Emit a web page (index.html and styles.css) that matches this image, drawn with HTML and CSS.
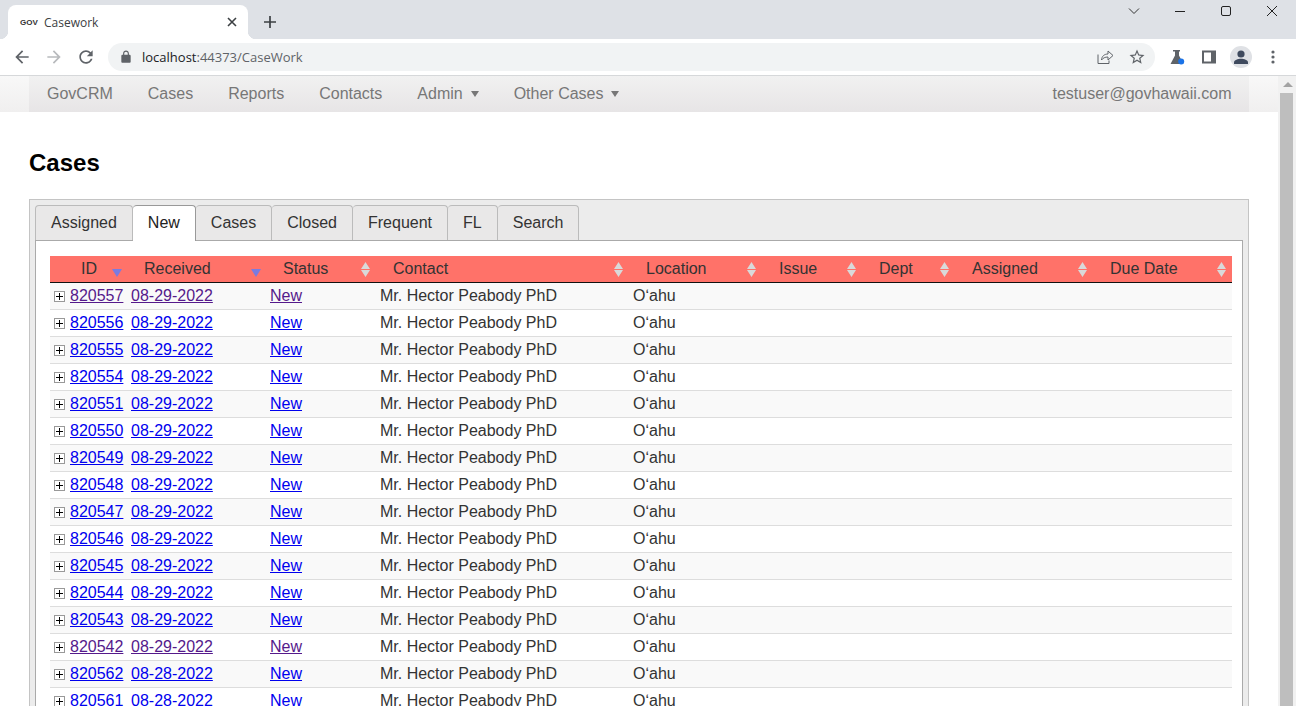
FILE: index.html
```html
<!DOCTYPE html>
<html lang="en">
<head>
    <meta charset="UTF-8">
    <title>Casework</title>
    <link rel="stylesheet" href="styles.css">
</head>
<body>
<div class="window">
    <div class="tabstrip">
        <div class="browser-tab">
            <span class="favicon">GOV</span>
            <span class="tab-title">Casework</span>
            <svg class="tab-close" width="10" height="10" viewBox="0 0 10 10"><path d="M1 1l8 8M9 1l-8 8" stroke="#3c4043" stroke-width="1.6" fill="none"/></svg>
        </div>
        <svg class="new-tab" width="14" height="14" viewBox="0 0 14 14"><path d="M7 1v12M1 7h12" stroke="#3c4043" stroke-width="1.7" fill="none"/></svg>
        <div class="win-controls">
            <span class="win-btn"><svg width="12" height="12" viewBox="0 0 12 12"><path d="M1 3.5l5 5 5-5" stroke="#333" fill="none"/></svg></span>
            <span class="win-btn"><svg width="12" height="12" viewBox="0 0 12 12"><path d="M1 6.5h10" stroke="#222" fill="none"/></svg></span>
            <span class="win-btn"><svg width="12" height="12" viewBox="0 0 12 12"><rect x="1.5" y="1.5" width="9" height="9" rx="1.5" stroke="#222" fill="none"/></svg></span>
            <span class="win-btn"><svg width="12" height="12" viewBox="0 0 12 12"><path d="M1 1l10 10M11 1L1 11" stroke="#222" fill="none"/></svg></span>
        </div>
    </div>
    <div class="toolbar">
        <span class="tool-btn"><svg width="20" height="20" viewBox="0 0 24 24" fill="#5f6368"><path d="M20 11H7.83l5.59-5.59L12 4l-8 8 8 8 1.41-1.41L7.83 13H20v-2z"/></svg></span>
        <span class="tool-btn"><svg width="20" height="20" viewBox="0 0 24 24" fill="#b8babd"><path d="M4 11h12.17l-5.59-5.59L12 4l8 8-8 8-1.41-1.41L16.17 13H4v-2z"/></svg></span>
        <span class="tool-btn"><svg width="20" height="20" viewBox="0 0 24 24" fill="#5f6368"><path d="M17.65 6.35C16.2 4.9 14.21 4 12 4c-4.42 0-7.99 3.58-7.99 8s3.57 8 7.99 8c3.73 0 6.84-2.55 7.73-6h-2.08c-.82 2.33-3.04 4-5.65 4-3.31 0-6-2.69-6-6s2.69-6 6-6c1.66 0 3.14.69 4.22 1.78L13 11h7V4l-2.35 2.35z"/></svg></span>
        <div class="omnibox">
            <svg class="lock" width="14" height="14" viewBox="0 0 24 24" fill="#5f6368"><path d="M18 8h-1V6c0-2.76-2.24-5-5-5S7 3.24 7 6v2H6c-1.1 0-2 .9-2 2v10c0 1.1.9 2 2 2h12c1.1 0 2-.9 2-2V10c0-1.1-.9-2-2-2zM9 6c0-1.66 1.34-3 3-3s3 1.34 3 3v2H9V6z"/></svg>
            <span class="url"><span class="url-host">localhost</span>:44373/CaseWork</span>
            <span class="tool-btn push-right"><svg width="16" height="15" viewBox="0 0 16 15" fill="none" stroke="#5f6368"><path d="M1 5.5v9h11v-3"/><path d="M4.5 11c.3-4 3-6 6.500-6V2l5 4.500-5 4.500V8c-3 0-5 1-6.500 3z"/></svg></span>
            <span class="tool-btn"><svg width="18" height="18" viewBox="0 0 24 24" fill="#5f6368"><path d="M22 9.240l-7.190-.62L12 2 9.190 8.630 2 9.240l5.460 4.730L5.820 21 12 17.270 18.180 21l-1.630-7.030L22 9.240zM12 15.400l-3.760 2.270 1-4.280-3.320-2.880 4.380-.38L12 6.100l1.710 4.040 4.380.38-3.320 2.880 1 4.280L12 15.400z"/></svg></span>
        </div>
        <span class="tool-btn first-ext"><svg width="16" height="16" viewBox="0 0 16 16"><path d="M4 1h7v1.500h-1v4l4.500 8.500H1.500L6 6.500v-4H4z" fill="#5f6368"/><circle cx="12.200" cy="12.500" r="3" fill="#1a73e8"/></svg></span>
        <span class="tool-btn"><svg width="14" height="14" viewBox="0 0 14 14"><rect x="0" y="0.500" width="14" height="13" fill="#5f6368"/><rect x="2" y="2.500" width="7" height="9" fill="#fff"/></svg></span>
        <span class="tool-btn"><span class="avatar"><svg width="16" height="14" viewBox="0 0 16 14" fill="#3f4a5e"><circle cx="8" cy="4" r="3.600"/><path d="M1 14v-1.500C1 10 5 8.800 8 8.800s7 1.200 7 3.700V14z"/></svg></span></span>
        <span class="tool-btn"><svg width="4" height="14" viewBox="0 0 4 14" fill="#5f6368"><circle cx="2" cy="2" r="1.600"/><circle cx="2" cy="7" r="1.600"/><circle cx="2" cy="12" r="1.600"/></svg></span>
    </div>

    <div class="viewport">
        <div class="page">
            <div class="navbar">
                <div class="nav-inner">
                    <a class="nav-link">GovCRM</a>
                    <a class="nav-link">Cases</a>
                    <a class="nav-link">Reports</a>
                    <a class="nav-link">Contacts</a>
                    <a class="nav-link">Admin<span class="caret"></span></a>
                    <a class="nav-link">Other Cases<span class="caret"></span></a>
                    <a class="nav-link nav-user">testuser@govhawaii.com</a>
                </div>
            </div>

            <h1 class="page-title">Cases</h1>

            <div class="tabs-box">
                <ul class="tabs">
                    <li class="tab">Assigned</li>
                    <li class="tab tab-active">New</li>
                    <li class="tab">Cases</li>
                    <li class="tab">Closed</li>
                    <li class="tab">Frequent</li>
                    <li class="tab">FL</li>
                    <li class="tab">Search</li>
                </ul>
                <div class="tab-panel">
                    <table class="cases">
                        <colgroup>
                            <col class="col-id"><col class="col-received"><col class="col-status"><col class="col-contact"><col class="col-location"><col class="col-issue"><col class="col-dept"><col class="col-assigned"><col class="col-due">
                        </colgroup>
                        <thead>
                            <tr>
                                <th class="th-id"><div class="th-inner">ID<svg class="sort-down" width="10" height="8" viewBox="0 0 10 8"><path d="M0 0h10L5 8z"/></svg></div></th>
                                <th><div class="th-inner">Received<svg class="sort-down" width="10" height="8" viewBox="0 0 10 8"><path d="M0 0h10L5 8z"/></svg></div></th>
                                <th><div class="th-inner">Status<svg class="sort" width="9" height="15" viewBox="0 0 9 15"><path d="M4.500 0L9 7H0zM0 8h9l-4.500 7z"/></svg></div></th>
                                <th><div class="th-inner">Contact<svg class="sort" width="9" height="15" viewBox="0 0 9 15"><path d="M4.500 0L9 7H0zM0 8h9l-4.500 7z"/></svg></div></th>
                                <th><div class="th-inner">Location<svg class="sort" width="9" height="15" viewBox="0 0 9 15"><path d="M4.500 0L9 7H0zM0 8h9l-4.500 7z"/></svg></div></th>
                                <th><div class="th-inner">Issue<svg class="sort" width="9" height="15" viewBox="0 0 9 15"><path d="M4.500 0L9 7H0zM0 8h9l-4.500 7z"/></svg></div></th>
                                <th><div class="th-inner">Dept<svg class="sort" width="9" height="15" viewBox="0 0 9 15"><path d="M4.500 0L9 7H0zM0 8h9l-4.500 7z"/></svg></div></th>
                                <th><div class="th-inner">Assigned<svg class="sort" width="9" height="15" viewBox="0 0 9 15"><path d="M4.500 0L9 7H0zM0 8h9l-4.500 7z"/></svg></div></th>
                                <th><div class="th-inner">Due Date<svg class="sort" width="9" height="15" viewBox="0 0 9 15"><path d="M4.500 0L9 7H0zM0 8h9l-4.500 7z"/></svg></div></th>
                            </tr>
                        </thead>
                        <tbody>
                            <tr class="seen"><td><span class="expand"></span><a>820557</a></td><td><a>08-29-2022</a></td><td><a>New</a></td><td>Mr. Hector Peabody PhD</td><td>Oʻahu</td><td></td><td></td><td></td><td></td></tr>
                            <tr><td><span class="expand"></span><a>820556</a></td><td><a>08-29-2022</a></td><td><a>New</a></td><td>Mr. Hector Peabody PhD</td><td>Oʻahu</td><td></td><td></td><td></td><td></td></tr>
                            <tr><td><span class="expand"></span><a>820555</a></td><td><a>08-29-2022</a></td><td><a>New</a></td><td>Mr. Hector Peabody PhD</td><td>Oʻahu</td><td></td><td></td><td></td><td></td></tr>
                            <tr><td><span class="expand"></span><a>820554</a></td><td><a>08-29-2022</a></td><td><a>New</a></td><td>Mr. Hector Peabody PhD</td><td>Oʻahu</td><td></td><td></td><td></td><td></td></tr>
                            <tr><td><span class="expand"></span><a>820551</a></td><td><a>08-29-2022</a></td><td><a>New</a></td><td>Mr. Hector Peabody PhD</td><td>Oʻahu</td><td></td><td></td><td></td><td></td></tr>
                            <tr><td><span class="expand"></span><a>820550</a></td><td><a>08-29-2022</a></td><td><a>New</a></td><td>Mr. Hector Peabody PhD</td><td>Oʻahu</td><td></td><td></td><td></td><td></td></tr>
                            <tr><td><span class="expand"></span><a>820549</a></td><td><a>08-29-2022</a></td><td><a>New</a></td><td>Mr. Hector Peabody PhD</td><td>Oʻahu</td><td></td><td></td><td></td><td></td></tr>
                            <tr><td><span class="expand"></span><a>820548</a></td><td><a>08-29-2022</a></td><td><a>New</a></td><td>Mr. Hector Peabody PhD</td><td>Oʻahu</td><td></td><td></td><td></td><td></td></tr>
                            <tr><td><span class="expand"></span><a>820547</a></td><td><a>08-29-2022</a></td><td><a>New</a></td><td>Mr. Hector Peabody PhD</td><td>Oʻahu</td><td></td><td></td><td></td><td></td></tr>
                            <tr><td><span class="expand"></span><a>820546</a></td><td><a>08-29-2022</a></td><td><a>New</a></td><td>Mr. Hector Peabody PhD</td><td>Oʻahu</td><td></td><td></td><td></td><td></td></tr>
                            <tr><td><span class="expand"></span><a>820545</a></td><td><a>08-29-2022</a></td><td><a>New</a></td><td>Mr. Hector Peabody PhD</td><td>Oʻahu</td><td></td><td></td><td></td><td></td></tr>
                            <tr><td><span class="expand"></span><a>820544</a></td><td><a>08-29-2022</a></td><td><a>New</a></td><td>Mr. Hector Peabody PhD</td><td>Oʻahu</td><td></td><td></td><td></td><td></td></tr>
                            <tr><td><span class="expand"></span><a>820543</a></td><td><a>08-29-2022</a></td><td><a>New</a></td><td>Mr. Hector Peabody PhD</td><td>Oʻahu</td><td></td><td></td><td></td><td></td></tr>
                            <tr class="seen"><td><span class="expand"></span><a>820542</a></td><td><a>08-29-2022</a></td><td><a>New</a></td><td>Mr. Hector Peabody PhD</td><td>Oʻahu</td><td></td><td></td><td></td><td></td></tr>
                            <tr><td><span class="expand"></span><a>820562</a></td><td><a>08-28-2022</a></td><td><a>New</a></td><td>Mr. Hector Peabody PhD</td><td>Oʻahu</td><td></td><td></td><td></td><td></td></tr>
                            <tr><td><span class="expand"></span><a>820561</a></td><td><a>08-28-2022</a></td><td><a>New</a></td><td>Mr. Hector Peabody PhD</td><td>Oʻahu</td><td></td><td></td><td></td><td></td></tr>
                        </tbody>
                    </table>
                </div>
            </div>
        </div>
        <div class="scrollbar">
            <span class="scroll-up"></span>
            <div class="scroll-thumb"></div>
        </div>
    </div>
</div>
</body>
</html>
```
FILE: styles.css
```css
html, body {
    margin: 0;
    padding: 0;
    height: 100%;
    overflow: hidden;
}

body {
    font-family: "Liberation Sans", Arial, sans-serif;
    font-size: 16px;
    color: #333;
    background: #fff;
}

.window {
    display: flex;
    flex-direction: column;
    height: 100vh;
}

/* browser chrome */
.tabstrip {
    display: flex;
    align-items: flex-start;
    height: 39px;
    flex: none;
    padding-left: 8px;
    box-sizing: border-box;
    background: #dee1e6;
}

.browser-tab {
    position: relative;
    display: flex;
    align-items: center;
    width: 240px;
    height: 34px;
    margin-top: 5px;
    padding-left: 12px;
    box-sizing: border-box;
    background: #fff;
    border-radius: 8px 8px 0 0;
}

.browser-tab::before,
.browser-tab::after {
    content: "";
    position: absolute;
    bottom: 0;
    width: 8px;
    height: 8px;
}

.browser-tab::before {
    left: -8px;
    background: radial-gradient(circle at 0 0, #dee1e6 8px, #fff 8.500px);
}

.browser-tab::after {
    right: -8px;
    background: radial-gradient(circle at 100% 0, #dee1e6 8px, #fff 8.500px);
}

.favicon {
    width: 24px;
    font-family: "Liberation Sans", sans-serif;
    font-size: 8px;
    font-weight: bold;
    color: #333;
}

.tab-title {
    flex: 1;
    font-family: "Open Sans", sans-serif;
    font-size: 12px;
    color: #3c4043;
}

.tab-close {
    margin-right: 11px;
}

.new-tab {
    margin: 15px 0 0 15px;
}

.win-controls {
    display: flex;
    margin-left: auto;
    margin-right: 1px;
}

.win-btn {
    display: flex;
    align-items: center;
    justify-content: center;
    width: 46px;
    height: 22px;
}

.toolbar {
    display: flex;
    align-items: center;
    flex: none;
    height: 37px;
    padding: 0 7px 1px 6px;
    box-sizing: border-box;
    background: #fff;
    border-bottom: 1px solid #d6d8da;
}

.tool-btn {
    display: flex;
    align-items: center;
    justify-content: center;
    flex: none;
    width: 32px;
    height: 28px;
}

.omnibox {
    display: flex;
    align-items: center;
    flex: 1;
    height: 28px;
    margin: 0 6px;
    padding: 0 2px 0 11px;
    background: #f1f3f4;
    border-radius: 14px;
}

.lock {
    margin-right: 9px;
}

.url {
    font-family: "Open Sans", sans-serif;
    font-size: 13px;
    color: #5f6368;
}

.url-host {
    color: #202124;
}

.push-right {
    margin-left: auto;
}

.avatar {
    display: flex;
    align-items: flex-end;
    justify-content: center;
    width: 22px;
    height: 22px;
    padding-bottom: 4px;
    box-sizing: border-box;
    background: #dfe1e5;
    border-radius: 50%;
}

/* page */
.viewport {
    display: flex;
    flex: 1;
    min-height: 0;
    overflow: hidden;
}

.page {
    flex: 1;
    min-width: 0;
}

.navbar {
    height: 36px;
    padding-left: 29px;
    background: linear-gradient(#f8f8f8, #f0efef);
}

.nav-inner {
    display: flex;
    align-items: center;
    width: 1220px;
    height: 36px;
    padding: 0 17.500px 0 0.500px;
    box-sizing: border-box;
    background: linear-gradient(#f1f1f1, #e7e5e6);
}

.nav-link {
    padding: 0 17.500px;
    color: #777;
}

.nav-user {
    margin-left: auto;
    padding-right: 0;
}

.caret {
    display: inline-block;
    margin-left: 8px;
    vertical-align: 2px;
    border-top: 6px solid #777;
    border-left: 4.500px solid transparent;
    border-right: 4.500px solid transparent;
}

.page-title {
    margin: 37px 0 22px 29px;
    font-size: 24px;
    line-height: 28px;
    font-weight: bold;
    color: #000;
}

.tabs-box {
    width: 1220px;
    margin-left: 29px;
    padding: 5px 5px 0;
    box-sizing: border-box;
    background: #ececec;
    border: 1px solid #c4c4c4;
    border-bottom: none;
}

.tabs {
    display: flex;
    margin: 0;
    padding: 0;
    list-style: none;
}

.tab {
    height: 35px;
    padding: 0 15px;
    line-height: 34px;
    color: #333;
    background: #e9e8e8;
    border: 1px solid #bbb;
    border-left: none;
    border-bottom: none;
    border-radius: 4px 4px 0 0;
    box-sizing: border-box;
}

.tab:first-child {
    border-left: 1px solid #bbb;
    padding-left: 15px;
}

.tab-active {
    position: relative;
    height: 36px;
    margin-bottom: -1px;
    background: #fff;
    border-top-color: #999;
    border-right-color: #999;
    color: #222;
}

.tab-panel {
    padding: 15px 10px 0 14px;
    background: #fff;
    border: 1px solid #aaa;
    border-bottom: none;
}

/* cases table */
.cases {
    width: 1182px;
    table-layout: fixed;
    border-collapse: separate;
    border-spacing: 0;
}

.col-id { width: 77px; }
.col-received { width: 139px; }
.col-status { width: 110px; }
.col-contact { width: 253px; }
.col-location { width: 133px; }
.col-issue { width: 100px; }
.col-dept { width: 93px; }
.col-assigned { width: 138px; }
.col-due { width: 139px; }

.cases th {
    height: 26px;
    padding: 0 6px 0 17px;
    font-weight: normal;
    text-align: left;
    color: #333;
    background: #ff7269;
    border-bottom: 1px solid #111;
}

.cases th.th-id {
    padding-left: 31px;
}

.th-inner {
    display: flex;
    align-items: center;
    justify-content: space-between;
}

.sort {
    fill: #d9d9d9;
    margin-top: 1px;
}

.sort-down {
    fill: #7b7bdf;
    margin-top: 7px;
    margin-right: -1px;
}

.cases td {
    height: 26px;
    padding: 0 4px;
    white-space: nowrap;
    color: #333;
    border-bottom: 1px solid #ddd;
}

.cases tbody tr:nth-child(odd) td {
    background: #f9f9f9;
}

.cases a {
    color: #00e;
    text-decoration: underline;
}

.cases .seen a {
    color: #551a8b;
}

.expand {
    display: inline-block;
    width: 11px;
    height: 11px;
    margin-right: 5px;
    box-sizing: border-box;
    vertical-align: -1px;
    border: 1px solid #999;
    background:
        linear-gradient(#000, #000) center / 7px 1px no-repeat,
        linear-gradient(#000, #000) center / 1px 7px no-repeat,
        #fff;
}

/* fake page scrollbar */
.scrollbar {
    display: flex;
    flex-direction: column;
    align-items: center;
    flex: none;
    width: 18px;
    padding-left: 1px;
    box-sizing: border-box;
    background: #f1f1f1;
}

.scroll-up {
    margin-top: 6px;
    border-bottom: 5px solid #a3a3a3;
    border-left: 5px solid transparent;
    border-right: 5px solid transparent;
}

.scroll-thumb {
    flex: 1;
    align-self: stretch;
    margin: 6px 3px 0 1px;
    background: #bebebe;
}
```
